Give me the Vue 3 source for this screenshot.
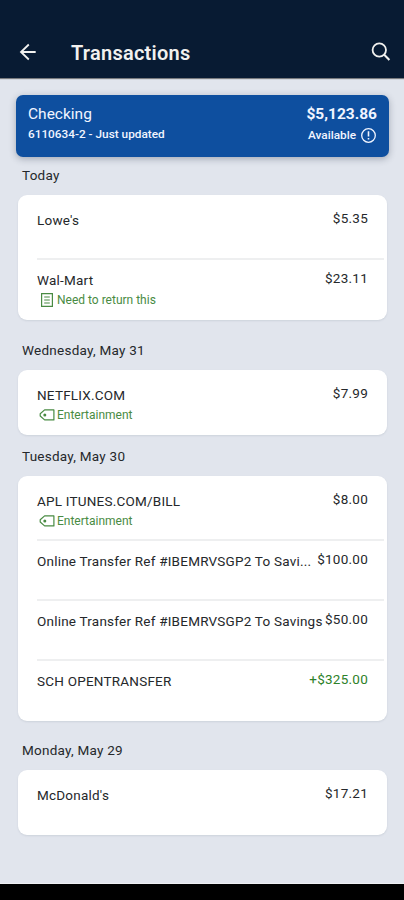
<script setup>
const groups = [
  {
    day: 'Today',
    rows: [
      { name: "Lowe's", amount: '$5.35' },
      { name: 'Wal-Mart', amount: '$23.11', note: 'Need to return this', icon: 'note' },
    ],
  },
  {
    day: 'Wednesday, May 31',
    rows: [{ name: 'NETFLIX.COM', amount: '$7.99', note: 'Entertainment', icon: 'tag' }],
  },
  {
    day: 'Tuesday, May 30',
    rows: [
      { name: 'APL ITUNES.COM/BILL', amount: '$8.00', note: 'Entertainment', icon: 'tag' },
      { name: 'Online Transfer Ref #IBEMRVSGP2 To Savi...', amount: '$100.00' },
      { name: 'Online Transfer Ref #IBEMRVSGP2 To Savings', amount: '$50.00' },
      { name: 'SCH OPENTRANSFER', amount: '+$325.00', credit: true },
    ],
  },
  { day: 'Monday, May 29', rows: [{ name: "McDonald's", amount: '$17.21' }] },
]
</script>

<template>
  <div class="screen">
    <header class="topbar">
      <svg class="back" width="18" height="18" viewBox="0 0 18 18" fill="none" stroke="currentColor" stroke-width="1.8">
        <path d="M16.7 9H2M9.8 1.5L2 9l7.8 7.5" />
      </svg>
      <h1>Transactions</h1>
      <svg class="search" width="20" height="20" viewBox="0 0 20 20" fill="none" stroke="currentColor" stroke-width="1.8">
        <circle cx="8.3" cy="8" r="6.7" />
        <path d="M13 12.6l5.4 5.4" stroke-width="2.1" />
      </svg>
    </header>

    <main>
      <section class="account">
        <div class="line">
          <span class="title">Checking</span>
          <span class="balance">$5,123.86</span>
        </div>
        <div class="line sub">
          <span class="number">6110634-2 - Just updated</span>
          <span class="available">
            Available
            <svg width="16" height="16" viewBox="0 0 16 16" fill="none" stroke="currentColor" stroke-width="1.3">
              <circle cx="7.5" cy="8.5" r="6.8" />
              <path d="M7.5 4.3v5.2M7.5 11v1.6" stroke-width="1.6" />
            </svg>
          </span>
        </div>
      </section>

      <section v-for="group in groups" :key="group.day" class="group">
        <h2>{{ group.day }}</h2>
        <div class="card">
          <div v-for="(row, i) in group.rows" :key="i" class="row">
            <div class="detail">
              <div class="name">{{ row.name }}</div>
              <div v-if="row.note" class="note">
                <svg v-if="row.icon === 'note'" width="17" height="14" viewBox="0 0 17 14" fill="none" stroke="currentColor">
                  <path d="M2.6 .7h10.8v12.6H2.6z" stroke-width="1.2" />
                  <path d="M5.2 4h5.6M5.2 7h5.6M5.2 10h5.6" stroke-width="1" />
                </svg>
                <svg v-else width="17" height="14" viewBox="0 0 17 14" fill="none" stroke="currentColor">
                  <path d="M5.6 1.9h9.3v10H5.6L1.2 8V5.8z" stroke-width="1.2" stroke-linejoin="round" />
                  <circle cx="5.8" cy="6.9" r="1.5" fill="currentColor" stroke="none" />
                </svg>
                <span>{{ row.note }}</span>
              </div>
            </div>
            <span class="amount" :class="{ credit: row.credit }">{{ row.amount }}</span>
          </div>
        </div>
      </section>
    </main>
    <footer></footer>
  </div>
</template>

<style>
body {
  background: #e1e5ed;
}
</style>

<style scoped>
.screen {
  display: flex;
  flex-direction: column;
  height: 900px;
  overflow: hidden;
  background: #e1e5ed;
  color: #25282b;
  font-family: Roboto, "Liberation Sans", sans-serif;
  white-space: nowrap;
}
.topbar {
  box-sizing: border-box;
  flex: none;
  display: flex;
  align-items: center;
  height: 78px;
  padding: 26px 13px 0 19px;
  background: #081b33;
  color: #f1f1ef;
  box-shadow: 0 1px 1px #0007;
}
h1 {
  flex: 1;
  margin: 0 0 0 34px;
  padding-top: 1px;
  font-size: 20px;
  line-height: 24px;
  font-weight: 600;
  letter-spacing: 0.25px;
}
main {
  flex: 1;
}
.account {
  box-sizing: border-box;
  height: 62px;
  margin: 17px 15px 0 16px;
  padding: 9px 12px 0;
  border-radius: 7px;
  background: #0e4f9f;
  color: #f1f5ff;
  box-shadow: 0 2px 7px #26324855;
}
.line {
  display: flex;
  align-items: center;
  justify-content: space-between;
  height: 20px;
}
.title {
  font-size: 15.5px;
}
.balance {
  font-size: 15.5px;
  font-weight: 700;
}
.sub {
  font-size: 11.8px;
  font-weight: 500;
}
.available {
  display: flex;
  align-items: center;
  gap: 5px;
  padding-top: 1px;
}
h2 {
  margin: 0;
  padding: 0 22px;
  height: 20px;
  line-height: 20px;
  font-size: 13.5px;
  font-weight: 400;
  letter-spacing: 0.25px;
}
.group {
  padding-top: 11px;
}
.group:nth-of-type(2) {
  padding-top: 8px;
}
.group:nth-of-type(3) {
  padding-top: 20px;
}
.group:nth-of-type(5) {
  padding-top: 19px;
}
.card {
  margin: 10px 17px 0 18px;
  padding: 3px 3px 2px 19px;
  border-radius: 9px;
  background: #fff;
  box-shadow: 0 1px 2px #4450661f;
}
.row {
  box-sizing: border-box;
  display: flex;
  justify-content: space-between;
  height: 60px;
  padding: 12px 16px 0 0;
}
.row + .row {
  background: linear-gradient(#eeeff0, #eeeff0) 0 0 / 100% 2px no-repeat;
}
.detail {
  min-width: 0;
}
.name {
  height: 20px;
  line-height: 20px;
  font-size: 13.5px;
  letter-spacing: 0.22px;
}
.amount {
  margin-top: -2px;
  height: 20px;
  line-height: 20px;
  font-size: 13.5px;
  letter-spacing: 0.25px;
}
.credit {
  color: #2d8129;
}
.note {
  display: flex;
  align-items: center;
  gap: 1px;
  height: 18px;
  padding: 1px 0 0 2px;
  color: #498b43;
  font-size: 12px;
}
footer {
  flex: none;
  height: 16px;
  background: #000;
  box-shadow: 0 -1px 0 #eef0f3;
}
</style>
